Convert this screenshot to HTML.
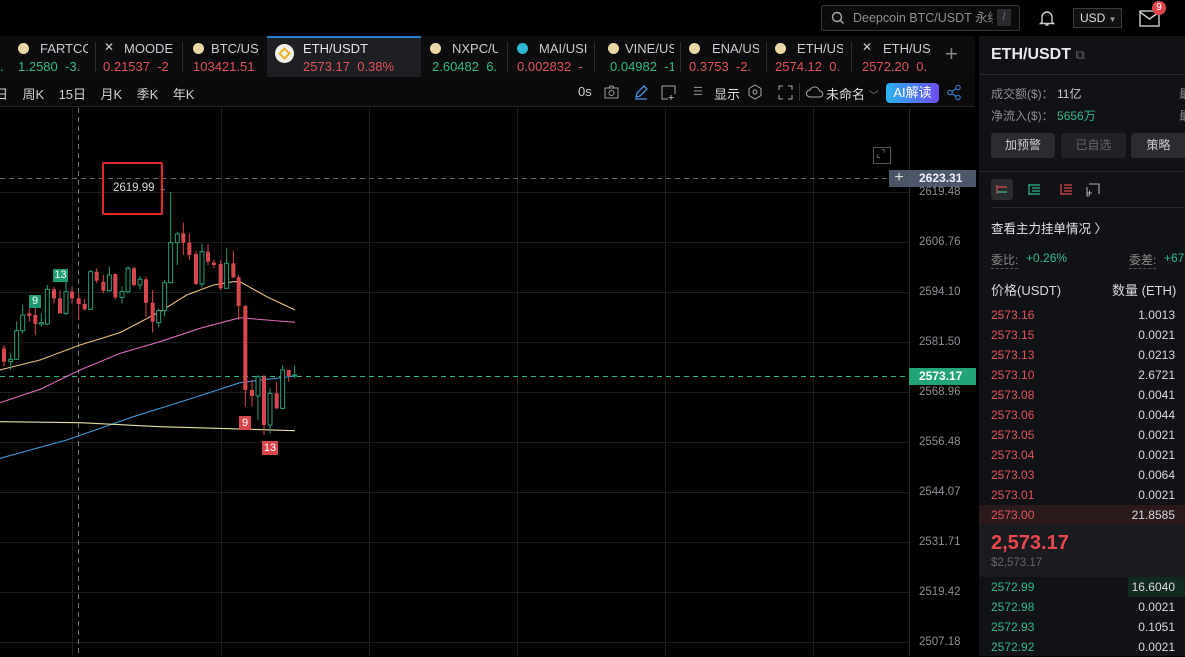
<!DOCTYPE html>
<html><head><meta charset="utf-8"><style>
*{margin:0;padding:0;box-sizing:border-box}
body{width:1185px;height:656px;overflow:hidden;background:#000;font-family:"Liberation Sans","Noto Sans CJK SC",sans-serif;color:#d8d9dc;position:relative;font-size:12px}
.a{position:absolute;white-space:nowrap}
.r{color:#e0525a}.g{color:#2eb88a}
.tab{position:absolute;top:36px;height:41px;font-size:13px;overflow:hidden;white-space:nowrap}
.tab .n{position:absolute;left:22px;top:5px;color:#c9cacd}
.tab .p{position:absolute;left:2px;top:23px;font-size:13px}
.tab .i{position:absolute;left:2px;top:7px;width:11px;height:11px;border-radius:50%;background:#e9d7a6}
.tab .x{position:absolute;left:3px;top:4px;color:#ccc;font-size:12px}
.sep{position:absolute;top:42px;width:1px;height:30px;background:#2a2b2f}
.ax{position:absolute;left:919px;font-size:11.5px;color:#8b8e95}
.row{position:absolute;left:979px;width:206px;height:20px;font-size:12px}
.row .pp{position:absolute;left:12px;top:3px}
.row .q{position:absolute;right:10px;top:3px;color:#d8d9dc}
</style></head><body>
<!-- top bar -->
<div class="a" style="left:821px;top:5px;width:199px;height:26px;border:1px solid #34363b;border-radius:3px;background:#0b0b0c"></div>
<svg class="a" style="left:831px;top:11px" width="14" height="14"><circle cx="6" cy="6" r="4.5" stroke="#aaa" stroke-width="1.4" fill="none"/><line x1="9.5" y1="9.5" x2="12.5" y2="12.5" stroke="#aaa" stroke-width="1.4"/></svg>
<div class="a" style="left:853px;top:10px;font-size:12.5px;color:#8d8f94;width:140px;overflow:hidden;line-height:16px">Deepcoin BTC/USDT 永续</div>
<div class="a" style="left:997px;top:9px;width:14px;height:17px;background:#2a2b2f;color:#777;font-size:11px;text-align:center;line-height:17px">/</div>
<svg class="a" style="left:1038px;top:9px" width="18" height="18"><path d="M4 13V8a5 5 0 0 1 10 0v5l1.5 1.5h-13zM7.5 16h3" stroke="#ccc" stroke-width="1.4" fill="none"/></svg>
<div class="a" style="left:1073px;top:8px;width:49px;height:20px;border:1px solid #3a3c41;background:#111;font-size:12px;line-height:18px;padding-left:6px;color:#ddd">USD <span style="font-size:8px;color:#999">▼</span></div>
<svg class="a" style="left:1139px;top:10px" width="22" height="18"><rect x="1" y="1" width="19" height="15" stroke="#ccc" stroke-width="1.4" fill="none"/><path d="M1 2l9.5 7 9.5-7" stroke="#ccc" stroke-width="1.4" fill="none"/></svg>
<div class="a" style="left:1152px;top:1px;width:14px;height:14px;border-radius:50%;background:#e0474f;color:#fff;font-size:10px;text-align:center;line-height:14px">9</div>
<!-- tabs -->
<div class="a" style="left:0;top:36px;width:975px;height:41px;background:#0c0c0e"></div>
<div class="a" style="left:267px;top:36px;width:154px;height:41px;background:#1e1f23;border-top:2px solid #2f7fd6"></div>
<div class="a g" style="left:0;top:59px;font-size:13px">.</div>
<div class="tab" style="left:16px;width:72px"><div class="i"></div><div class="n" style="left:24px">FARTCO</div><div class="p g">1.2580&nbsp; -3.</div></div>
<div class="sep" style="left:95px"></div>
<div class="tab" style="left:101px;width:72px"><div class="x">✕</div><div class="n" style="left:23px">MOODE</div><div class="p r">0.21537&nbsp; -2</div></div>
<div class="sep" style="left:182px"></div>
<div class="tab" style="left:193px;width:65px"><div class="i" style="left:0"></div><div class="n" style="left:18px">BTC/USI</div><div class="p r" style="left:0">103421.51</div></div>
<div class="a" style="left:275px;top:44px;width:19px;height:19px;border-radius:50%;background:#f2f0ea"></div>
<div class="a" style="left:280px;top:49px;width:9px;height:9px;border:2px solid #e8b42c;transform:rotate(45deg)"></div>
<div class="a" style="left:303px;top:41px;font-size:13px;color:#e4e5e7">ETH/USDT</div>
<div class="a r" style="left:303px;top:59px;font-size:13px">2573.17&nbsp; 0.38%</div>
<div class="tab" style="left:428px;width:70px"><div class="i" style="left:2px"></div><div class="n" style="left:24px">NXPC/U</div><div class="p g" style="left:4px">2.60482&nbsp; 6.</div></div>
<div class="sep" style="left:507px"></div>
<div class="tab" style="left:515px;width:72px"><div class="i" style="left:2px;background:#2fb6d0"></div><div class="n" style="left:24px">MAI/USI</div><div class="p r" style="left:2px">0.002832&nbsp; -</div></div>
<div class="sep" style="left:594px"></div>
<div class="tab" style="left:606px;width:68px"><div class="i"></div><div class="n" style="left:19px">VINE/US</div><div class="p g" style="left:4px">0.04982&nbsp; -1</div></div>
<div class="sep" style="left:680px"></div>
<div class="tab" style="left:689px;width:70px"><div class="i" style="left:0"></div><div class="n" style="left:23px">ENA/US</div><div class="p r" style="left:0">0.3753&nbsp; -2.</div></div>
<div class="sep" style="left:766px"></div>
<div class="tab" style="left:775px;width:68px"><div class="i" style="left:0"></div><div class="n" style="left:22px">ETH/US</div><div class="p r" style="left:0">2574.12&nbsp; 0.</div></div>
<div class="sep" style="left:851px"></div>
<div class="tab" style="left:861px;width:70px"><div class="x" style="left:1px">✕</div><div class="n" style="left:22px">ETH/US</div><div class="p r" style="left:1px">2572.20&nbsp; 0.</div></div>
<div class="a" style="left:945px;top:41px;font-size:22px;color:#888;font-weight:300">+</div>
<!-- toolbar -->
<div class="a" style="left:0;top:77px;width:975px;height:30px;background:#0a0a0b;border-bottom:1px solid #222"></div>
<div class="a" style="left:-5px;top:84px;font-size:13px;color:#cfd0d3">日&nbsp;&nbsp;&nbsp; 周K&nbsp;&nbsp;&nbsp; 15日&nbsp;&nbsp;&nbsp; 月K&nbsp;&nbsp;&nbsp; 季K&nbsp;&nbsp;&nbsp; 年K</div>
<div class="a" style="left:578px;top:84px;font-size:13px;color:#ccc">0s</div>
<svg class="a" style="left:604px;top:85px" width="16" height="14"><rect x="1" y="3" width="13" height="10" stroke="#999" fill="none"/><circle cx="7.5" cy="8" r="2.5" stroke="#999" fill="none"/><path d="M5 3l1-2h3l1 2" stroke="#999" fill="none"/></svg>
<svg class="a" style="left:633px;top:84px" width="16" height="16"><path d="M3 13l1-4 7-7 3 3-7 7zM2 15h12" stroke="#4a90e2" stroke-width="1.3" fill="none"/></svg>
<svg class="a" style="left:661px;top:85px" width="16" height="16"><path d="M1 1h13v8M1 1v13h6M10 10v5M7.5 12.5h5" stroke="#aaa" fill="none"/></svg>
<div class="a" style="left:693px;top:85px;color:#888;font-size:11px">☰</div>
<div class="a" style="left:714px;top:84px;font-size:13px;color:#ddd">显示</div>
<svg class="a" style="left:747px;top:84px" width="16" height="16"><path d="M8 1l6 3.5v7L8 15l-6-3.5v-7z" stroke="#aaa" fill="none"/><circle cx="8" cy="8" r="2" stroke="#aaa" fill="none"/></svg>
<svg class="a" style="left:778px;top:85px" width="15" height="15"><path d="M1 5V1h4M10 1h4v4M14 10v4h-4M5 14H1v-4" stroke="#aaa" fill="none"/></svg>
<div class="a" style="left:799px;top:83px;width:1px;height:18px;background:#333"></div>
<svg class="a" style="left:806px;top:86px" width="18" height="12"><path d="M4 11a3.5 3.5 0 0 1 0-7 5 5 0 0 1 9.5 1A3 3 0 0 1 14 11z" stroke="#aaa" fill="none"/></svg>
<div class="a" style="left:826px;top:84px;font-size:13px;color:#ddd">未命名 <span style="color:#888;font-size:10px">﹀</span></div>
<div class="a" style="left:886px;top:83px;width:53px;height:20px;border-radius:4px;background:linear-gradient(90deg,#2ab3ef,#6c4cf0);color:#fff;font-size:13px;text-align:center;line-height:20px">AI解读</div>
<svg class="a" style="left:946px;top:84px" width="17" height="17"><circle cx="12" cy="3.5" r="2.2" stroke="#3b8ee8" fill="none"/><circle cx="4" cy="8.5" r="2.2" stroke="#3b8ee8" fill="none"/><circle cx="12" cy="13.5" r="2.2" stroke="#3b8ee8" fill="none"/><path d="M6 7.3l4-2.6M6 9.7l4 2.6" stroke="#3b8ee8"/></svg>
<!-- chart -->
<svg id="ch" class="a" style="left:0;top:0" width="976" height="656"></svg>
<div class="a" style="left:873px;top:147px;width:18px;height:17px;border:1px solid #555"></div>
<div class="a" style="left:876px;top:149px;font-size:10px;color:#888">⌞⌝</div>
<div class="a" style="left:102px;top:162px;width:61px;height:53px;border:2px solid #e3262a;border-radius:2px"></div>
<div class="a" style="left:113px;top:182px;font-size:11.5px;color:#ddd">2619.99 <span style="font-size:9px;color:#aaa">→</span></div>
<div class="a" style="left:889px;top:170px;width:20px;height:17px;background:#4b5566;color:#ddd;text-align:center;font-size:16px;line-height:16px">+</div>
<div class="a" style="left:909px;top:170px;width:67px;height:17px;background:#4d5769;color:#eef;font-size:12px;line-height:17px;padding-left:10px;font-weight:bold">2623.31</div>
<div class="a" style="left:909px;top:368px;width:67px;height:17px;background:#23a477;color:#fff;font-size:12px;line-height:17px;padding-left:10px;font-weight:bold">2573.17</div>
<div class="ax" style="top:186px">2619.48</div>
<div class="ax" style="top:236px">2606.76</div>
<div class="ax" style="top:286px">2594.10</div>
<div class="ax" style="top:336px">2581.50</div>
<div class="ax" style="top:386px">2568.96</div>
<div class="ax" style="top:436px">2556.48</div>
<div class="ax" style="top:486px">2544.07</div>
<div class="ax" style="top:536px">2531.71</div>
<div class="ax" style="top:586px">2519.42</div>
<div class="ax" style="top:636px">2507.18</div>
<div class="a" style="left:53px;top:269px;width:15px;height:13px;background:#1e9a73;color:#fff;font-size:11px;text-align:center;line-height:13px">13</div>
<div class="a" style="left:29px;top:295px;width:12px;height:13px;background:#1e9a73;color:#fff;font-size:11px;text-align:center;line-height:13px">9</div>
<div class="a" style="left:239px;top:416px;width:12px;height:14px;background:#d9474e;color:#fff;font-size:11px;text-align:center;line-height:14px">9</div>
<div class="a" style="left:262px;top:441px;width:16px;height:14px;background:#d9474e;color:#fff;font-size:11px;text-align:center;line-height:14px">13</div>
<!-- right panel -->
<div class="a" style="left:976px;top:36px;width:3px;height:620px;background:#000"></div>
<div class="a" style="left:979px;top:36px;width:206px;height:620px;background:#111215"></div>
<div class="a" style="left:991px;top:46px;font-size:16px;font-weight:bold;color:#e8e9eb">ETH/USDT <span style="font-weight:normal;color:#666;font-size:13px">⧉</span></div>
<div class="a" style="left:979px;top:74px;width:206px;height:1px;background:#26282c"></div>
<div class="a" style="left:991px;top:85px;color:#8d8f94">成交额($)：&nbsp;<span style="color:#ccc">11亿</span></div>
<div class="a" style="left:991px;top:107px;color:#8d8f94">净流入($)：&nbsp;<span class="g">5656万</span></div>
<div class="a" style="left:1179px;top:85px;color:#888">最</div><div class="a" style="left:1179px;top:107px;color:#888">最</div>
<div class="a" style="left:991px;top:133px;width:64px;height:25px;background:#2a2c31;border-radius:3px;color:#ccc;text-align:center;line-height:25px">加预警</div>
<div class="a" style="left:1061px;top:133px;width:65px;height:25px;background:#202226;border-radius:3px;color:#666;text-align:center;line-height:25px">已自选</div>
<div class="a" style="left:1131px;top:133px;width:65px;height:25px;background:#2a2c31;border-radius:3px;color:#ccc;text-align:center;line-height:25px;padding-right:10px">策略</div>
<div class="a" style="left:979px;top:171px;width:206px;height:1px;background:#26282c"></div>
<div class="a" style="left:991px;top:179px;width:22px;height:21px;background:#2a2c30;border-radius:3px"></div>
<svg class="a" style="left:995px;top:183px" width="14" height="13"><path d="M2 2v9M2 4h10M2 9h10" stroke="#d9474e" stroke-width="1.2"/><path d="M2 9h10" stroke="#2eb88a" stroke-width="1.2"/></svg>
<svg class="a" style="left:1027px;top:183px" width="14" height="13"><path d="M2 1v11M2 2h11M5 5h8M5 8h8M2 11h11" stroke="#2eb88a" stroke-width="1.2"/></svg>
<svg class="a" style="left:1059px;top:183px" width="14" height="13"><path d="M2 1v11M2 11h11M5 2h8M5 5h8M5 8h8" stroke="#d9474e" stroke-width="1.2"/></svg>
<svg class="a" style="left:1086px;top:183px" width="14" height="14"><path d="M3 1h10v10M1 4v9M1 13h2M1 10h5M3.5 7.5v5" stroke="#aaa" stroke-width="1.1" fill="none"/></svg>
<div class="a" style="left:991px;top:207px;width:194px;height:1px;background:#26282c"></div>
<div class="a" style="left:991px;top:218px;font-size:12.5px;color:#e3e4e6">查看主力挂单情况 〉</div>
<div class="a" style="left:991px;top:251px;color:#888;border-bottom:1px dashed #555">委比:</div>
<div class="a g" style="left:1026px;top:251px">+0.26%</div>
<div class="a" style="left:1129px;top:251px;color:#888;border-bottom:1px dashed #555">委差:</div>
<div class="a g" style="left:1164px;top:251px">+67</div>
<div class="a" style="left:991px;top:280px;font-size:13px;color:#d8d9dc">价格(USDT)</div>
<div class="a" style="left:1112px;top:280px;font-size:13px;color:#d8d9dc">数量 (ETH)</div>
<div id="ob"></div>
<div class="a" style="left:979px;top:525px;width:206px;height:52px;background:#191b1f"></div>
<div class="a" style="left:991px;top:532px;font-size:20px;font-weight:bold;color:#e9474f">2,573.17</div>
<div class="a" style="left:991px;top:557px;font-size:11.5px;color:#666">$2,573.17</div>
<script>
var s='',ch=document.getElementById('ch');
function L(x1,y1,x2,y2,c,d){s+='<line x1="'+x1+'" y1="'+y1+'" x2="'+x2+'" y2="'+y2+'" stroke="'+c+'" stroke-width="1"'+(d?' stroke-dasharray="'+d+'"':'')+'/>';}
for(var y=192;y<656;y+=50)L(0,y+.5,909,y+.5,'#1c1d20');
[72,221,369,517,665,813].forEach(function(x){L(x+.5,108,x+.5,656,'#1c1d20')});
L(909.5,108,909.5,656,'#2a2b2e');
L(0,178.5,889,178.5,'#666','5,4');
L(0,376.5,909,376.5,'#2eb88a','5,4');
L(78.5,108,78.5,656,'#777','5,4');
function P(pts,c){var d='';for(var i=0;i<pts.length;i+=2)d+=(i?'L':'M')+(pts[i]/3)+' '+(pts[i+1]/3+140);s+='<path d="'+d+'" stroke="'+c+'" stroke-width="1.1" fill="none"/>';}
P([0,690,120,660,240,615,360,578,480,515,560,465,640,435,700,425,720,425,800,470,885,510],'#e8c27a');
P([0,788,120,748,240,690,360,640,480,605,600,565,720,533,800,540,885,547],'#d966b8');
P([0,955,200,900,400,830,560,780,720,728,885,708],'#3a9ad9');
P([0,845,240,848,480,860,885,872],'#e6e0a0');
var c=[[12,'R',625,665,615,680],[32,'G',658,665,640,690],[50,'G',572,658,545,660],[68,'G',525,572,495,580],[88,'R',520,528,505,545],[106,'R',525,552,505,585],[124,'G',548,552,520,560],[142,'G',448,552,435,555],[162,'R',448,475,440,490],[180,'R',475,520,450,520],[198,'G',455,520,400,525],[216,'R',455,475,440,490],[236,'R',475,492,460,540],[254,'R',492,508,478,512],[272,'G',395,508,390,510],[290,'R',395,422,385,430],[310,'R',425,452,405,460],[328,'G',405,452,380,455],[346,'R',402,472,400,478],[366,'G',455,472,440,490],[384,'G',385,455,378,460],[402,'R',385,435,380,440],[420,'G',418,435,408,448],[438,'R',418,488,410,530],[458,'R',488,545,450,578],[476,'G',512,548,505,562],[494,'G',428,512,420,530],[512,'G',308,428,155,430],[532,'G',282,308,275,375],[550,'R',280,308,248,345],[568,'R',308,345,280,360],[588,'R',342,432,332,435],[606,'G',335,432,310,442],[624,'R',335,365,312,375],[642,'R',368,375,358,385],[662,'R',372,445,360,450],[680,'G',370,445,325,445],[700,'R',370,412,332,415],[716,'R',412,498,405,540],[736,'R',498,750,495,800],[756,'R',750,768,720,800],[774,'G',710,768,705,840],[792,'R',710,855,705,885],[810,'G',760,855,745,880],[830,'R',760,805,725,808],[848,'G',690,805,675,808],[866,'R',690,708,690,725],[884,'G',705,708,678,715]];
c.forEach(function(k){var x=k[0]/3,col=k[1]=='R'?'#d9474e':'#26a17b';L(x,k[4]/3+140,x,k[5]/3+140,col);var t=k[2]/3+140,b=Math.max(k[3]/3+140,t+1);
if(k[1]=='R')s+='<rect x="'+(x-2)+'" y="'+t+'" width="4" height="'+(b-t)+'" fill="'+col+'"/>';else s+='<rect x="'+(x-2)+'" y="'+t+'" width="4" height="'+(b-t)+'" fill="#000" stroke="'+col+'"/>';});
ch.innerHTML=s;
var o='',ask=[['2573.16','1.0013'],['2573.15','0.0021'],['2573.13','0.0213'],['2573.10','2.6721'],['2573.08','0.0041'],['2573.06','0.0044'],['2573.05','0.0021'],['2573.04','0.0021'],['2573.03','0.0064'],['2573.01','0.0021'],['2573.00','21.8585']];
ask.forEach(function(a,i){var y=305+i*20;o+='<div class="row" style="top:'+y+'px;'+(i==10?'background:#2a1a1c':'')+'"><span class="pp r">'+a[0]+'</span><span class="q">'+a[1]+'</span></div>';});
var bid=[['2572.99','16.6040'],['2572.98','0.0021'],['2572.93','0.1051'],['2572.92','0.0021']];
bid.forEach(function(a,i){var y=577+i*20;o+='<div class="row" style="top:'+y+'px">'+(i==0?'<div style="position:absolute;left:149px;top:0;width:57px;height:20px;background:#12291f"></div>':'')+'<span class="pp g">'+a[0]+'</span><span class="q">'+a[1]+'</span></div>';});
document.getElementById('ob').innerHTML=o;
</script>
</body></html>
